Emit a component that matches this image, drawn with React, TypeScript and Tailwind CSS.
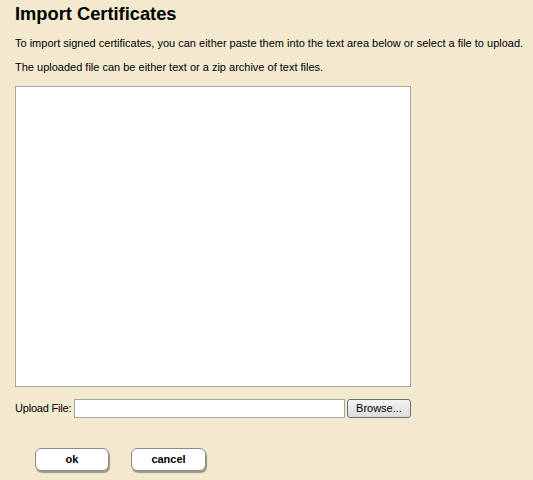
export default function App() {
  return (
    <div className="min-h-[480px] w-[533px] bg-[#f2e9ce] px-[15px] pt-[3px] font-['Liberation_Sans',Arial,sans-serif] text-black">
      <h1 className="text-[18.3px] leading-[22px] font-bold">Import Certificates</h1>
      <p className="mt-[12px] whitespace-nowrap text-[11px] leading-[13px]">
        To import signed certificates, you can either paste them into the text area below or select a file to upload.
      </p>
      <p className="mt-[11px] whitespace-nowrap text-[11px] leading-[13px]">
        The uploaded file can be either text or a zip archive of text files.
      </p>
      <textarea className="mt-[12px] block h-[301px] w-[396px] resize-none border border-[#a5a5a5] bg-white outline-none" />
      <div className="mt-[12px] flex w-[396px] items-center text-[11px]">
        <span className="mr-[3px] shrink-0 whitespace-nowrap tracking-[-0.2px]">Upload File:</span>
        <input type="text" className="h-[19px] min-w-0 flex-1 border border-[#a5a5a5] bg-white outline-none" />
        <button className="ml-[2px] h-[19px] w-[64px] shrink-0 rounded-[3px] border border-[#707070] bg-gradient-to-b from-[#f4f4f4] to-[#dcdcdc] text-[11px]">
          Browse...
        </button>
      </div>
      <div className="mt-[30px] flex gap-[22px] pl-[20px]">
        <button className="h-[23px] w-[74px] rounded-[6px] border border-[#8a8a8a] bg-white text-[11px] font-bold shadow-[1px_2px_1px_rgba(0,0,0,0.35)]">
          ok
        </button>
        <button className="h-[23px] w-[75px] rounded-[6px] border border-[#8a8a8a] bg-white text-[11px] font-bold shadow-[1px_2px_1px_rgba(0,0,0,0.35)]">
          cancel
        </button>
      </div>
    </div>
  );
}
